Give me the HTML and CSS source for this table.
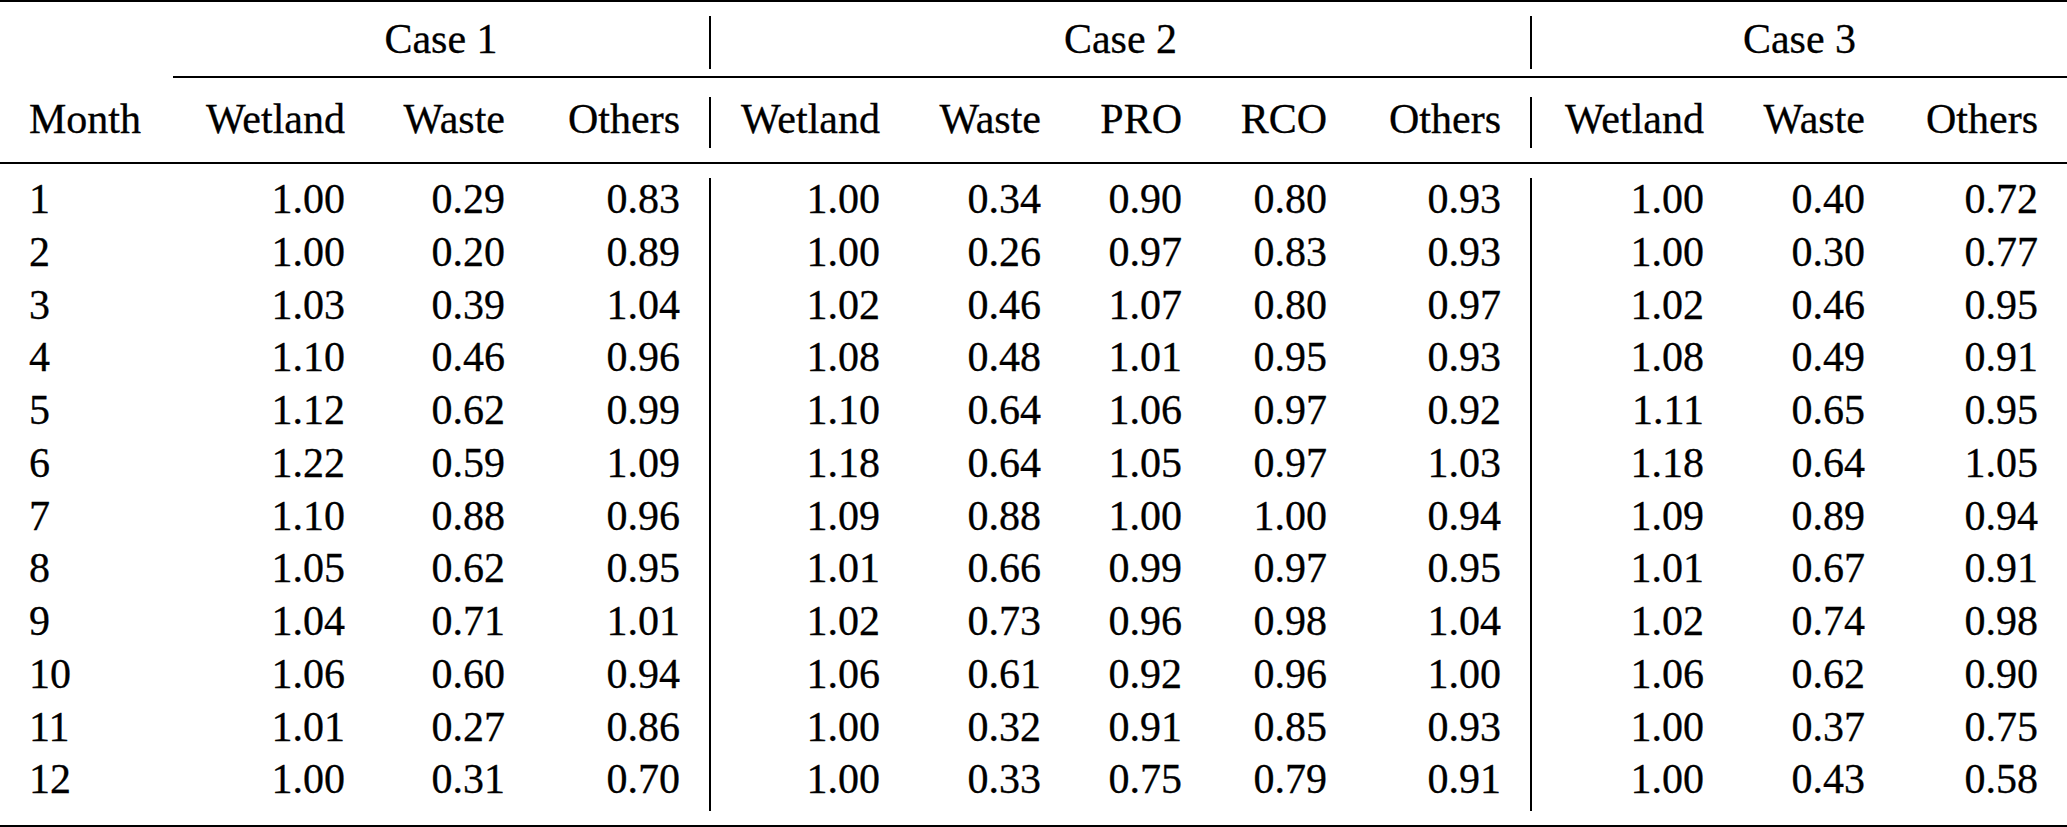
FILE: index.html
```html
<!DOCTYPE html>
<html lang="en">
<head>
<meta charset="utf-8">
<title>Monthly scaling factors</title>
<link rel="stylesheet" href="styles.css">
</head>
<body>
<div class="tab">
  <div class="rule thick full"></div>
  <div class="gap g14 full"></div>

  <div class="case"></div>
  <div class="case span3">Case 1</div>
  <div class="case span5 vl">Case 2</div>
  <div class="case span3 vl">Case 3</div>

  <div class="gap g7 full"></div>
  <div class="thin-blank"></div>
  <div class="rule thin rest"></div>
  <div class="gap g19 full"></div>

  <div class="hd mon">Month</div>
  <div class="hd">Wetland</div>
  <div class="hd">Waste</div>
  <div class="hd">Others</div>
  <div class="hd vl">Wetland</div>
  <div class="hd">Waste</div>
  <div class="hd">PRO</div>
  <div class="hd">RCO</div>
  <div class="hd">Others</div>
  <div class="hd vl">Wetland</div>
  <div class="hd">Waste</div>
  <div class="hd">Others</div>

  <div class="gap g14 full"></div>
  <div class="rule thick full"></div>
  <div class="gap g14 full"></div>

  <div class="c mon">1</div><div class="c">1.00</div><div class="c">0.29</div><div class="c">0.83</div><div class="c vl">1.00</div><div class="c">0.34</div><div class="c">0.90</div><div class="c">0.80</div><div class="c">0.93</div><div class="c vl">1.00</div><div class="c">0.40</div><div class="c">0.72</div>
  <div class="c mon">2</div><div class="c">1.00</div><div class="c">0.20</div><div class="c">0.89</div><div class="c vl">1.00</div><div class="c">0.26</div><div class="c">0.97</div><div class="c">0.83</div><div class="c">0.93</div><div class="c vl">1.00</div><div class="c">0.30</div><div class="c">0.77</div>
  <div class="c mon">3</div><div class="c">1.03</div><div class="c">0.39</div><div class="c">1.04</div><div class="c vl">1.02</div><div class="c">0.46</div><div class="c">1.07</div><div class="c">0.80</div><div class="c">0.97</div><div class="c vl">1.02</div><div class="c">0.46</div><div class="c">0.95</div>
  <div class="c mon">4</div><div class="c">1.10</div><div class="c">0.46</div><div class="c">0.96</div><div class="c vl">1.08</div><div class="c">0.48</div><div class="c">1.01</div><div class="c">0.95</div><div class="c">0.93</div><div class="c vl">1.08</div><div class="c">0.49</div><div class="c">0.91</div>
  <div class="c mon">5</div><div class="c">1.12</div><div class="c">0.62</div><div class="c">0.99</div><div class="c vl">1.10</div><div class="c">0.64</div><div class="c">1.06</div><div class="c">0.97</div><div class="c">0.92</div><div class="c vl">1.11</div><div class="c">0.65</div><div class="c">0.95</div>
  <div class="c mon">6</div><div class="c">1.22</div><div class="c">0.59</div><div class="c">1.09</div><div class="c vl">1.18</div><div class="c">0.64</div><div class="c">1.05</div><div class="c">0.97</div><div class="c">1.03</div><div class="c vl">1.18</div><div class="c">0.64</div><div class="c">1.05</div>
  <div class="c mon">7</div><div class="c">1.10</div><div class="c">0.88</div><div class="c">0.96</div><div class="c vl">1.09</div><div class="c">0.88</div><div class="c">1.00</div><div class="c">1.00</div><div class="c">0.94</div><div class="c vl">1.09</div><div class="c">0.89</div><div class="c">0.94</div>
  <div class="c mon">8</div><div class="c">1.05</div><div class="c">0.62</div><div class="c">0.95</div><div class="c vl">1.01</div><div class="c">0.66</div><div class="c">0.99</div><div class="c">0.97</div><div class="c">0.95</div><div class="c vl">1.01</div><div class="c">0.67</div><div class="c">0.91</div>
  <div class="c mon">9</div><div class="c">1.04</div><div class="c">0.71</div><div class="c">1.01</div><div class="c vl">1.02</div><div class="c">0.73</div><div class="c">0.96</div><div class="c">0.98</div><div class="c">1.04</div><div class="c vl">1.02</div><div class="c">0.74</div><div class="c">0.98</div>
  <div class="c mon">10</div><div class="c">1.06</div><div class="c">0.60</div><div class="c">0.94</div><div class="c vl">1.06</div><div class="c">0.61</div><div class="c">0.92</div><div class="c">0.96</div><div class="c">1.00</div><div class="c vl">1.06</div><div class="c">0.62</div><div class="c">0.90</div>
  <div class="c mon">11</div><div class="c">1.01</div><div class="c">0.27</div><div class="c">0.86</div><div class="c vl">1.00</div><div class="c">0.32</div><div class="c">0.91</div><div class="c">0.85</div><div class="c">0.93</div><div class="c vl">1.00</div><div class="c">0.37</div><div class="c">0.75</div>
  <div class="c mon">12</div><div class="c">1.00</div><div class="c">0.31</div><div class="c">0.70</div><div class="c vl">1.00</div><div class="c">0.33</div><div class="c">0.75</div><div class="c">0.79</div><div class="c">0.91</div><div class="c vl">1.00</div><div class="c">0.43</div><div class="c">0.58</div>

  <div class="gap g14 full"></div>
  <div class="rule thick full"></div>
</div>
</body>
</html>
```

FILE: styles.css
```css
html, body {
  margin: 0;
  padding: 0;
  background: #ffffff;
}

.tab {
  display: grid;
  grid-template-columns: 173px 201px 160px 175px 200px 161px 141px 145px 174px 203px 161px 173px;
  width: 2067px;
  font-family: "Liberation Serif", "Times New Roman", serif;
  font-size: 42px;
  color: #000000;
  -webkit-text-stroke: 0.3px #000000;
}

.full { grid-column: 1 / -1; }
.rest { grid-column: 2 / -1; }
.span3 { grid-column: span 3; }
.span5 { grid-column: span 5; }

.rule { background: #000000; }
.thick { height: 2px; }
.thin { height: 1.5px; }
.thin-blank { height: 1.5px; }

.gap { height: 14px; }
.g14 { height: 14px; }
.g7 { height: 7px; }
.g19 { height: 19.5px; }

.case {
  box-sizing: border-box;
  height: 53px;
  padding-top: 2px;
  line-height: 42px;
  text-align: center;
  white-space: nowrap;
}

.hd {
  box-sizing: border-box;
  height: 51px;
  padding: 1px 29px 0 0;
  line-height: 42px;
  text-align: right;
  white-space: nowrap;
}

.c {
  box-sizing: border-box;
  height: 52.75px;
  padding: 0 29px 0 0;
  line-height: 42px;
  text-align: right;
  white-space: nowrap;
}

.mon {
  text-align: left;
  padding-left: 29px;
  padding-right: 0;
}

.vl {
  border-left: 2px solid #000000;
}
```
